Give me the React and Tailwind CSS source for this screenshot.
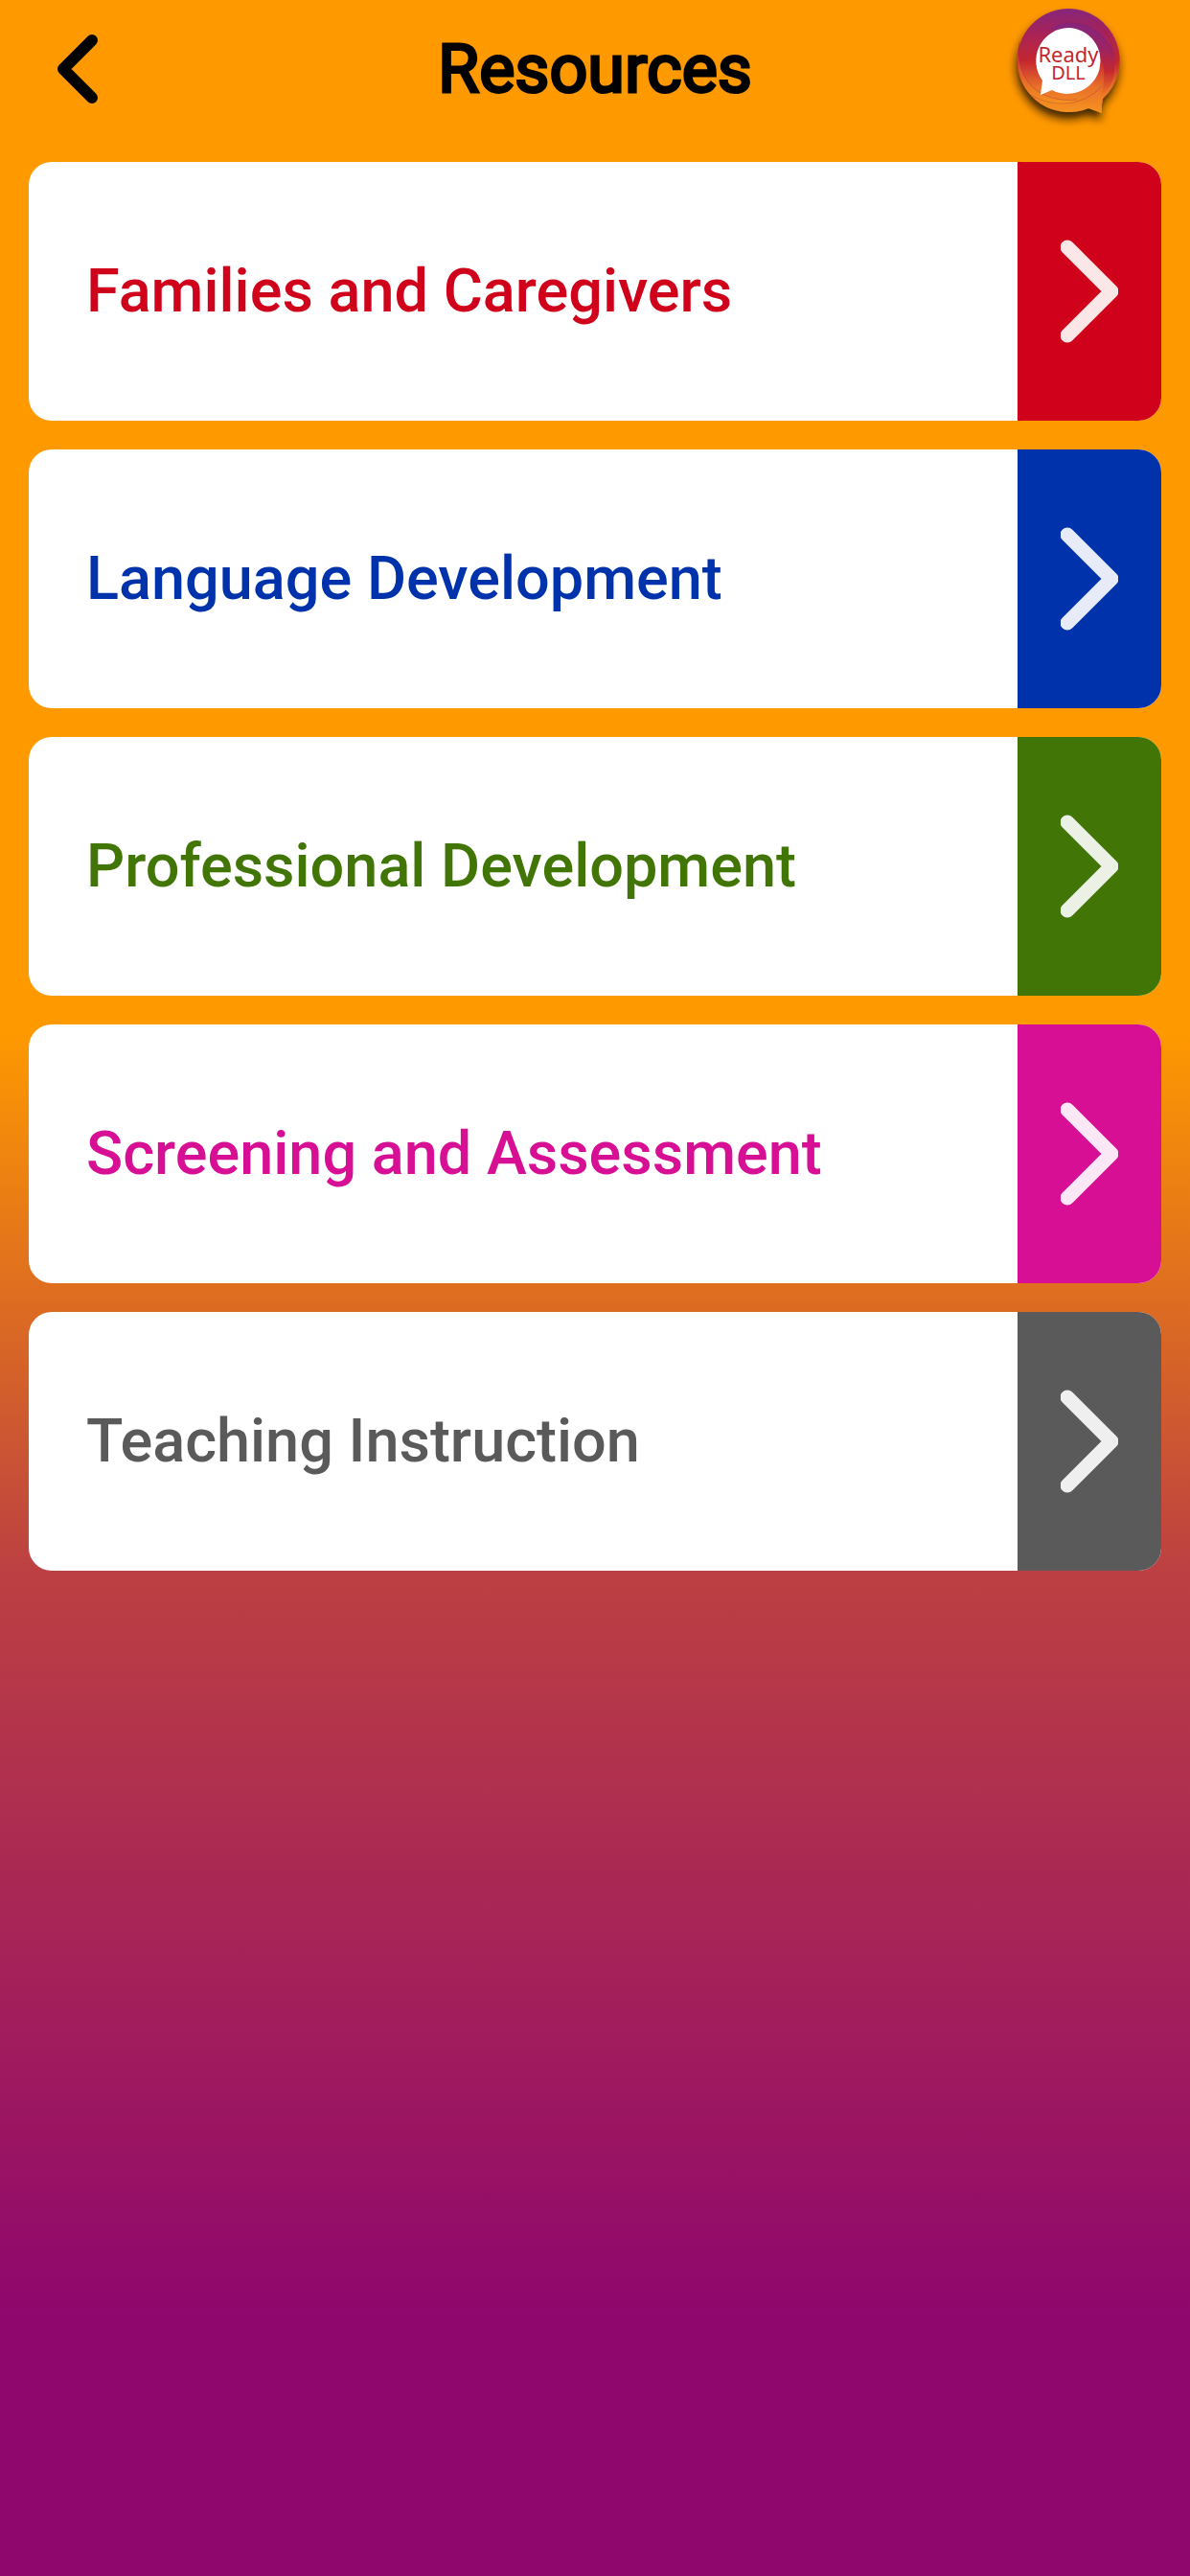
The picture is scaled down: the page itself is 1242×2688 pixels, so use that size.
const resources = [
  { label: "Families and Caregivers", text: "text-[#d0021b]", bg: "bg-[#d0021b]" },
  { label: "Language Development", text: "text-[#0033ab]", bg: "bg-[#0033ab]" },
  { label: "Professional Development", text: "text-[#417505]", bg: "bg-[#417505]" },
  { label: "Screening and Assessment", text: "text-[#d60f94]", bg: "bg-[#d60f94]" },
  { label: "Teaching Instruction", text: "text-[#5a5a5a]", bg: "bg-[#5a5a5a]" },
];

function Logo() {
  return (
    <svg viewBox="0 0 130 140" className="h-[140px] w-[130px]" role="img" aria-label="Ready DLL">
      <defs>
        <linearGradient id="ring" x1="0" y1="0" x2="0" y2="1">
          <stop offset="0" stopColor="#86257c" />
          <stop offset="0.25" stopColor="#a92456" />
          <stop offset="0.5" stopColor="#c4272f" />
          <stop offset="0.75" stopColor="#e9702a" />
          <stop offset="1" stopColor="#f7941e" />
        </linearGradient>
        <linearGradient id="swirlRight" x1="0" y1="0" x2="0" y2="1">
          <stop offset="0" stopColor="#86257c" />
          <stop offset="0.35" stopColor="#9c2363" />
          <stop offset="0.65" stopColor="#c4272f" />
          <stop offset="1" stopColor="#f07f23" />
        </linearGradient>
        <linearGradient id="swirlLeft" x1="0" y1="0" x2="0" y2="1">
          <stop offset="0" stopColor="#b5253f" />
          <stop offset="0.5" stopColor="#e2602b" />
          <stop offset="1" stopColor="#f7941e" />
        </linearGradient>
        <filter id="shade" x="-30%" y="-30%" width="160%" height="160%">
          <feDropShadow dx="-1" dy="7" stdDeviation="5" floodColor="#2a1400" floodOpacity="0.9" />
        </filter>
      </defs>
      <path
        filter="url(#shade)"
        fill="url(#ring)"
        d="M64.500 9 A54 54 0 0 1 101 103 Q99 110 100 118 L86 113 A54 54 0 1 1 64.500 9 Z"
      />
      <path fill="url(#swirlLeft)" d="M14 44 C8 84 36 108 74 104 C64 112 40 112 26 99 C12 84 10 60 14 44 Z" />
      <path fill="url(#swirlRight)" d="M44 31 C66 16 98 24 112 52 C117 76 110 94 98 101 C110 72 100 30 44 31 Z" />
      <path
        fill="none"
        stroke="#8f1f4a"
        strokeOpacity="0.3"
        strokeWidth="1"
        d="M70 12 C98 18 114 38 116 76 M60 24 C88 22 106 38 112 60 M26 99 C50 114 82 110 100 90 M14 44 C8 84 36 108 74 104"
      />
      <path fill="#fff" d="M65 29 A34.500 34.500 0 1 1 48 94 L36 99 L38 84 A34.500 34.500 0 0 1 65 29 Z" />
      <text x="65" y="65" textAnchor="middle" fontSize="22" fill="#c1272d" className="font-['Noto_Sans',sans-serif]">Ready</text>
      <text x="65" y="83" textAnchor="middle" fontSize="20" fill="#c1272d" className="font-['Noto_Sans',sans-serif]">DLL</text>
    </svg>
  );
}

export default function App() {
  return (
    <div className="min-h-screen bg-[linear-gradient(180deg,#ff9900_40%,#bc4042_61%,#8f066d_90%)] font-[Roboto,sans-serif]">
      <header className="grid h-36 grid-cols-[1fr_auto_1fr] items-center">
        <button type="button" aria-label="Back" className="ml-[60px] justify-self-start">
          <svg viewBox="0 0 42 72" className="h-[72px] w-[42px]" fill="none" stroke="#000" strokeWidth="12" strokeLinecap="round" strokeLinejoin="round">
            <path d="M36 6 L6 36 L36 66" />
          </svg>
        </button>
        <h1 className="text-[70px] leading-[82px] font-normal text-black [-webkit-text-stroke:3px_black]">Resources</h1>
        <div className="mr-[62px] justify-self-end self-start"><Logo /></div>
      </header>
      <main className="px-[30px] pt-[25px] pb-[30px]">
        <ul className="flex flex-col gap-[30px]">
          {resources.map((r) => (
            <li key={r.label}>
              <button type="button" className="flex h-[270px] w-full overflow-hidden rounded-3xl bg-white text-left">
                <span className={`flex-1 self-center pl-[60px] text-[63px] leading-[74px] font-medium ${r.text}`}>{r.label}</span>
                <span className={`flex w-[150px] items-center justify-center self-stretch ${r.bg}`}>
                  <svg viewBox="0 0 60 108" className="h-[108px] w-[60px]" fill="none" stroke="#fff" strokeOpacity="0.9" strokeWidth="15" strokeLinecap="round" strokeLinejoin="round">
                    <path d="M7 8 L53 54 L7 100" />
                  </svg>
                </span>
              </button>
            </li>
          ))}
        </ul>
      </main>
    </div>
  );
}
